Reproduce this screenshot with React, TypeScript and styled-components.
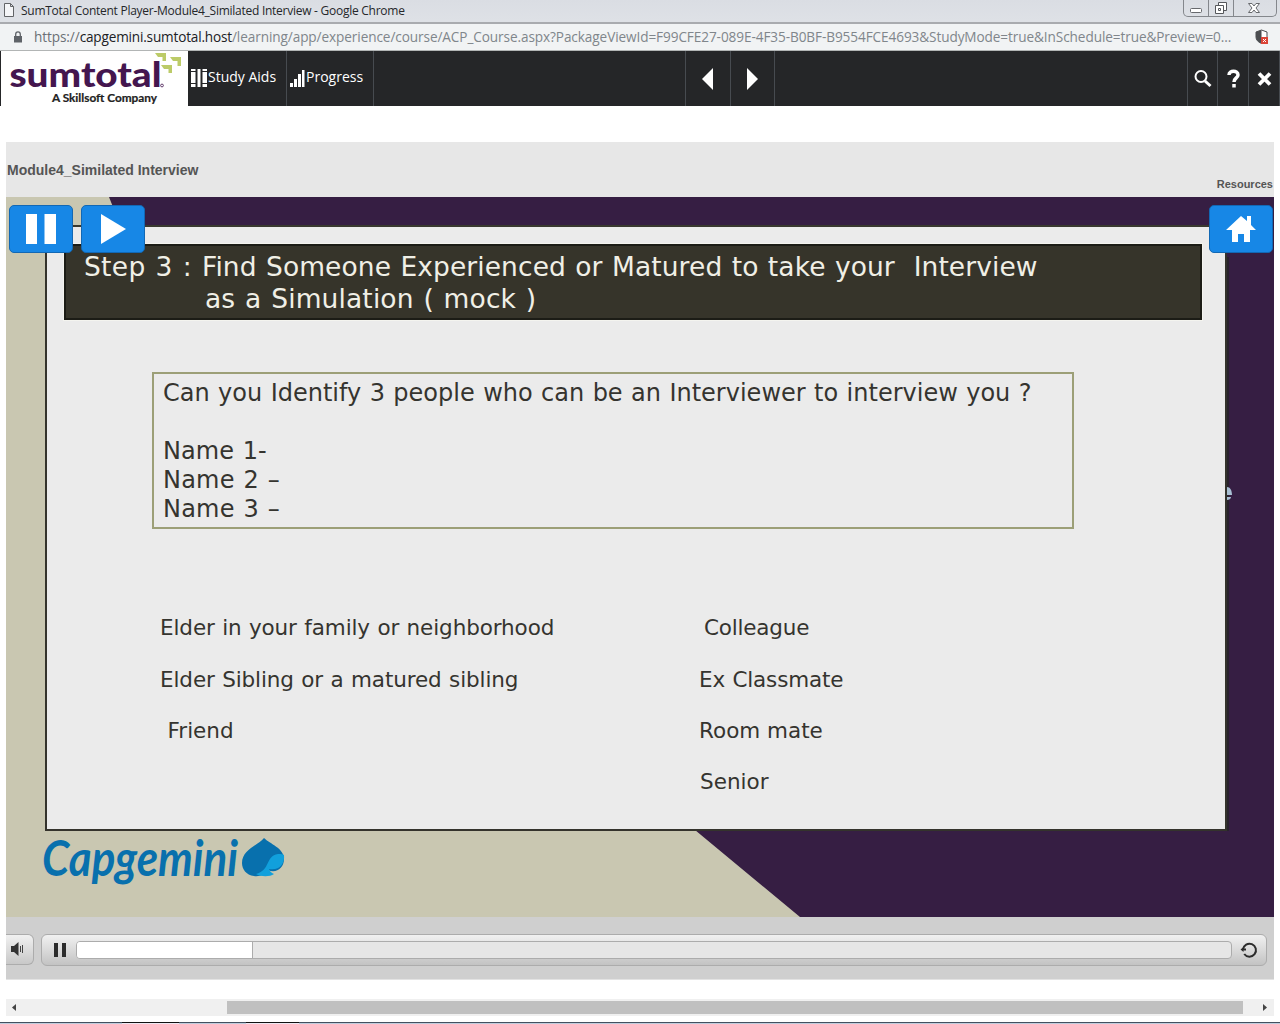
import React from "react";
import styled, { createGlobalStyle } from "styled-components";

const GlobalStyle = createGlobalStyle`
  * { box-sizing: border-box; }
  body { margin: 0; background: #fff; overflow: hidden; }
`;

const ui = `"Open Sans", "Noto Sans", sans-serif`;
const arial = `"Liberation Sans", Arial, sans-serif`;
const verdana = `"DejaVu Sans", Verdana, sans-serif`;

const Window = styled.div`
  width: 1280px;
  height: 1024px;
  display: flex;
  flex-direction: column;
  overflow: hidden;
  background: #fff;
  font-family: ${ui};
`;

const TitleBar = styled.header`
  height: 24px;
  flex: none;
  display: flex;
  align-items: flex-start;
  padding: 0 3px 0 4px;
  background: linear-gradient(#dadde3, #dee1e6 20px);
  border-bottom: 2px solid #a9abaf;
  color: #25272a;
`;

const Text = styled.span<{ $size: number; $spacing?: number; $word?: number; $line?: number }>`
  font-size: ${(p) => p.$size}px;
  letter-spacing: ${(p) => p.$spacing ?? 0}px;
  word-spacing: ${(p) => p.$word ?? 0}px;
  line-height: ${(p) => p.$line ?? 22}px;
  white-space: pre;
`;

const PageIcon = styled.svg`
  flex: none;
  margin: 3px 7px 0 0;
`;

const WindowControls = styled.div`
  display: flex;
  margin-left: auto;
  height: 17px;
  border: 1px solid #84878c;
  border-top: 0;
  border-radius: 0 0 5px 5px;
`;

const WindowControl = styled.div<{ $width: number }>`
  width: ${(p) => p.$width}px;
  display: flex;
  justify-content: center;
  & + & { border-left: 1px solid #84878c; }
`;

const AddressBar = styled.div`
  height: 27px;
  flex: none;
  display: flex;
  align-items: center;
  padding: 0 11px 0 13px;
  background: #f1f3f4;
  border-bottom: 1px solid #b2b5b5;
  color: #80868b;
`;

const Lock = styled.svg`
  flex: none;
  margin: 0 11px 0 0;
`;

const Host = styled.span`
  color: #202124;
  letter-spacing: -0.18px;
`;

const Scheme = styled.span`
  color: #6b7075;
`;

const Shield = styled.svg`
  flex: none;
  margin-left: auto;
`;

const Toolbar = styled.nav`
  height: 55px;
  flex: none;
  display: flex;
  background: #252628;
  color: #fff;
`;

const Brand = styled.div`
  width: 187px;
  margin-left: 1px;
  background: #fff;
`;

const Tool = styled.div<{ $width: number; $center?: boolean }>`
  width: ${(p) => p.$width}px;
  display: flex;
  align-items: center;
  justify-content: ${(p) => (p.$center ? "center" : "flex-start")};
  padding-left: ${(p) => (p.$center ? 0 : 3)}px;
  padding-bottom: ${(p) => (p.$center ? 0 : 2)}px;
  border-right: 1px solid #474b50;
`;

const ToolLabel = styled(Text)`
  margin-top: -2px;
`;

const Gap = styled.div<{ $width: number }>`
  width: ${(p) => p.$width}px;
  border-right: 1px solid #474b50;
`;

const Player = styled.main`
  width: 1268px;
  margin: 36px 0 0 6px;
  flex: none;
`;

const PlayerHeader = styled.div`
  height: 55px;
  display: flex;
  justify-content: space-between;
  padding: 0 1px;
  background: #e7e7e7;
  color: #555;
  font-family: ${arial};
  font-weight: bold;
`;

const ModuleName = styled(Text)`
  padding-top: 17px;
`;

const Resources = styled(Text)`
  padding-top: 31px;
`;

const Slide = styled.section`
  position: relative;
  height: 720px;
  padding: 28px 46px 0 39px;
  overflow: hidden;
  background: #c9c7b1;
  font-family: ${verdana};
`;

const Backdrop = styled.svg`
  position: absolute;
  inset: 0;
`;

const Sheet = styled.div`
  position: relative;
  width: 1182px;
  height: 606px;
  padding: 17px 17px 0 17px;
  background: #ebebeb;
  border: 2px solid #34332c;
  border-top-color: #39382f;
`;

const Heading = styled.div`
  width: 1138px;
  height: 76px;
  padding: 5px 0 0 18px;
  background: #36342a;
  border: 2px solid #1c1c16;
  box-shadow: 0 0 0 1px #f4f4ef;
  color: #f0efe6;
  display: flex;
  flex-direction: column;
`;

const HeadingSecond = styled(Text)`
  padding-left: 121px;
`;

const Question = styled.div`
  width: 922px;
  height: 157px;
  margin: 52px 0 0 88px;
  padding: 5px 0 0 9px;
  border: 2px solid #9c9f77;
  color: #35342f;
  display: flex;
  flex-direction: column;
`;

const Choices = styled.div`
  display: grid;
  grid-template-columns: 539px 1fr;
  grid-auto-rows: 51.4px;
  padding: 85px 0 0 96px;
  color: #35342f;
`;

const Choice = styled(Text)<{ $indent?: number }>`
  padding-left: ${(p) => p.$indent ?? 0}px;
`;

const Logo = styled.div`
  position: relative;
  display: flex;
  align-items: flex-start;
  margin: -16px 0 0 -9px;
`;

const SlideButton = styled.button<{ $left: number }>`
  position: absolute;
  top: 8px;
  left: ${(p) => p.$left}px;
  width: 64px;
  height: 48px;
  padding: 0;
  display: flex;
  align-items: center;
  justify-content: center;
  background: #1787e6;
  border: 1px solid #1268b4;
  border-radius: 5px;
`;

const Controls = styled.div`
  height: 63px;
  display: flex;
  align-items: flex-start;
  gap: 7px;
  padding: 17px 7px 0 0;
  background: #cfcfcf;
  border-bottom: 1px solid #e3e3e3;
`;

const Volume = styled.div`
  width: 28px;
  height: 31px;
  padding: 7px 0 0 4px;
  display: flex;
  align-items: flex-start;
  border: 1px solid #acacac;
  border-left: 0;
  border-radius: 0 6px 6px 0;
  background: linear-gradient(#f1f1f1, #c8c8c8);
`;

const SeekBar = styled.div`
  flex: 1;
  height: 32px;
  display: flex;
  align-items: center;
  padding: 0 8px 0 12px;
  border: 1px solid #acacac;
  border-radius: 6px;
  background: linear-gradient(#f1f1f1, #c3c3c3);
`;

const Track = styled.div`
  flex: 1;
  height: 18px;
  margin: 0 8px 0 9px;
  border: 1px solid #acacac;
  border-radius: 4px;
  background: #e6e6e6;
  overflow: hidden;
`;

const Played = styled.div`
  width: 176px;
  height: 16px;
  background: #fff;
  border-right: 1px solid #acacac;
`;

const ScrollBar = styled.div`
  width: 1268px;
  height: 17px;
  flex: none;
  margin: 19px 0 0 6px;
  padding: 0 6px;
  display: flex;
  align-items: center;
  background: #f0f0f0;
`;

const Thumb = styled.div`
  width: 1016px;
  height: 13px;
  margin: 0 auto 0 210px;
  background: #c0c0c0;
`;

const Taskbar = styled.footer`
  display: flex;
  height: 2px;
  margin-top: auto;
  background: linear-gradient(#43505f 50%, #c0cddd 50%);
`;

const TaskItem = styled.div<{ $width: number; $offset: number }>`
  width: ${(p) => p.$width}px;
  margin-left: ${(p) => p.$offset}px;
  background: linear-gradient(#111 50%, #eee8f2 50%);
`;

function BrandLogo() {
  return (
    <svg width="187" height="55" viewBox="1 51 187 55">
      <text x="9.500" y="87" fontFamily="Lato, sans-serif" fontWeight="900" fontSize="34" fill="#44164f" textLength="152" lengthAdjust="spacingAndGlyphs">sumtotal</text>
      <circle cx="162" cy="85.500" r="1.400" fill="none" stroke="#44164f" strokeWidth=".8" />
      <text x="52" y="102" fontFamily="Lato, sans-serif" fontWeight="700" fontSize="10.5" fill="#222" stroke="#222" strokeWidth=".2" textLength="105" lengthAdjust="spacingAndGlyphs">A Skillsoft Company</text>
      <g fill="#bccb68">
        <path d="M155 53h11v8h-3.500v-4H158z" />
        <path d="M170 57h11v9h-3.500v-5H173z" />
        <path d="M161 65h11v8h-3.500v-4H164z" />
      </g>
    </svg>
  );
}

function SpadeLogo() {
  return (
    <Logo>
      <svg width="256" height="88" viewBox="36 815 256 88">
        <text x="42" y="876" fontFamily="Lato, sans-serif" fontStyle="italic" fontWeight="700" fontSize="49" fill="#0870ad" textLength="196" lengthAdjust="spacingAndGlyphs">Capgemini</text>
        <path fill="#0870ad" d="M264 838c6 6 20 10 20 21 0 9-8 15-16 11-3 4-8 7-14 6-8-1-12-7-12-13 0-13 15-17 22-25z" />
        <path fill="#11a0dc" d="M284 855c1 9-5 16-15 14 1 3 3 4 5 5-4 3-13 3-18 0 15-4 9-18 22-20 3 0 5 0 6 1z" />
      </svg>
    </Logo>
  );
}

export default function App() {
  return (
    <Window>
      <GlobalStyle />
      <TitleBar>
        <PageIcon width="10" height="14" viewBox="0 0 10 14" fill="#f4f5f7" stroke="#626467">
          <path d="M.5.5h6l3 3v10h-9zM6.5.5v3h3" />
        </PageIcon>
        <Text $size={12} $spacing={-0.26}>SumTotal Content Player-Module4_Similated Interview - Google Chrome</Text>
        <WindowControls>
          <WindowControl $width={24}>
            <svg width="14" height="16"><rect x="1.5" y="8.5" width="11" height="4" rx="1" fill="#fff" stroke="#67696d" /></svg>
          </WindowControl>
          <WindowControl $width={25}>
            <svg width="14" height="16" fill="#fff" stroke="#55575b"><path d="M4.5 2.500h8v8h-8z" /><path d="M1.500 5.500h8v8h-8z" /><path d="M4.500 8.500h2v2h-2z" /></svg>
          </WindowControl>
          <WindowControl $width={43}>
            <svg width="18" height="16" viewBox="3 0 18 16" fill="#fff" stroke="#67696d"><path d="M5.500 3.500h3.500l2 2.500 2-2.500h3.500l-3.500 4.500 3.500 4.500H13L11 10l-2 2.500H5.500L9 8z" /></svg>
          </WindowControl>
        </WindowControls>
      </TitleBar>
      <AddressBar>
        <Lock width="10" height="12" viewBox="0 0 10 12"><path fill="#5f6368" d="M1 5h8v6.500H1z" /><path d="M2.700 5V3.200a2.300 2.300 0 0 1 4.600 0V5" fill="none" stroke="#5f6368" strokeWidth="1.300" /></Lock>
        <Text $size={13.6} $spacing={-0.09}>
          <Scheme>https://</Scheme><Host>capgemini.sumtotal.host</Host>/learning/app/experience/course/ACP_Course.aspx?PackageViewId=F99CFE27-089E-4F35-B0BF-B9554FCE4693&amp;StudyMode=true&amp;InSchedule=true&amp;Preview=0...
        </Text>
        <Shield width="14" height="16" viewBox="0 0 14 16">
          <path d="M6.500 1 12 3v5c0 3-2 5-5.500 6.500C3 13 1 11 1 8V3z" fill="#fff" stroke="#4b4d50" />
          <path d="M6.500 1v13.500C3 13 1 11 1 8V3z" fill="#4b4d50" />
          <path d="M6 8h7v7H6z" fill="#db4437" /><path d="m8 10 3 3m0-3-3 3" stroke="#fff" />
        </Shield>
      </AddressBar>
      <Toolbar>
        <Brand><BrandLogo /></Brand>
        <Tool $width={99}>
          <svg width="17" height="18" fill="#fff"><path d="M0 0h4.500v18H0zM6.500 0H9.500v18h-3zM11.500 0h4.500v18h-4.500z" /><path d="M0 2.500h5M0 14.500h5M11 2.500h5M11 14.500h5" stroke="#252628" /></svg>
          <ToolLabel $size={14}>Study Aids</ToolLabel>
        </Tool>
        <Tool $width={87}>
          <svg width="16" height="18" fill="#fff"><path d="M0 14h3v4H0zM4 10h3v8H4zM8 5h3v13H8zM12 1h2.500v17H12z" /></svg>
          <ToolLabel $size={14}>Progress</ToolLabel>
        </Tool>
        <Gap $width={312} />
        <Tool $width={45} $center><svg width="14" height="22"><path d="M12 0v22L1 11z" fill="#fff" /></svg></Tool>
        <Tool $width={44} $center><svg width="14" height="22"><path d="M1 0v22l11-11z" fill="#fff" /></svg></Tool>
        <Gap $width={413} />
        <Tool $width={30} $center>
          <svg width="20" height="20" fill="none" stroke="#fff"><circle cx="8" cy="7.500" r="5.500" strokeWidth="2" /><path d="m12 12 5.500 5" strokeWidth="3" /></svg>
        </Tool>
        <Tool $width={31} $center>
          <svg width="16" height="20" fill="none" stroke="#fff" strokeWidth="3.500"><path d="M4 6c0-5 9-5 9 0 0 3-4 3-4 7" /><path d="M9 15v3.500" /></svg>
        </Tool>
        <Tool $width={31} $center>
          <svg width="16" height="16"><path d="m3 2.500 11 11M14 2.500 3 13.500" stroke="#fff" strokeWidth="3.800" /></svg>
        </Tool>
      </Toolbar>
      <Player>
        <PlayerHeader>
          <ModuleName $size={14}>Module4_Similated Interview</ModuleName>
          <Resources $size={11}>Resources</Resources>
        </PlayerHeader>
        <Slide>
          <Backdrop width="1268" height="720">
            <path d="M103 0H1268V720H794L689 633V300L115 30Z" fill="#361e43" />
            <path d="M1221 60h2v574H695v-2h526z" fill="#29232d" />
            <path d="M1221 290c3 0 5 3 5 8h-5zM1221 300h4c0 2-2 3-4 3z" fill="#a9c0d4" />
          </Backdrop>
          <Sheet>
            <Heading>
              <Text $size={26.5} $spacing={0.12} $line={32}><Text $size={26.5} $spacing={0.3} $word={1.3} $line={32}>Step 3 : </Text><Text $size={26.5} $spacing={0.08} $word={0.9} $line={32}>Find Someone Experienced or Matured to take your  Interview</Text></Text>
              <HeadingSecond $size={26.5} $spacing={0.13} $word={1.2} $line={32}>as a Simulation ( mock )</HeadingSecond>
            </Heading>
            <Question>
              <Text $size={24} $word={0.8} $line={29}>Can you Identify 3 people who can be an Interviewer to interview you ?</Text>
              <Text $size={24} $line={29}> </Text>
              <Text $size={24} $spacing={0.1} $word={0.8} $line={29}>Name 1-</Text>
              <Text $size={24} $spacing={0.2} $word={1} $line={29}>Name 2 –</Text>
              <Text $size={24} $spacing={0.2} $word={1} $line={29}>Name 3 –</Text>
            </Question>
            <Choices>
              <Choice $size={21.5} $spacing={-0.11} $word={0.7} $line={28}>Elder in your family or neighborhood</Choice>
              <Choice $size={21.5} $spacing={-0.2} $line={28} $indent={5}>Colleague</Choice>
              <Choice $size={21.5} $spacing={-0.11} $word={0.7} $line={29}>Elder Sibling or a matured sibling</Choice>
              <Choice $size={21.5} $spacing={-0.15} $word={0.7} $line={29}>Ex Classmate</Choice>
              <Choice $size={21.5} $line={27} $indent={7.5}>Friend</Choice>
              <Choice $size={21.5} $line={27}>Room mate</Choice>
              <span />
              <Choice $size={21.5} $line={28} $indent={1}>Senior</Choice>
            </Choices>
          </Sheet>
          <SpadeLogo />
          <SlideButton $left={3} aria-label="Pause"><svg width="30" height="30" fill="#fff"><path d="M0 0h11v30H0zM18.500 0H30v30H18.500z" /></svg></SlideButton>
          <SlideButton $left={75} aria-label="Play"><svg width="26" height="30" fill="#fff"><path d="M1 0v30l25-15z" /></svg></SlideButton>
          <SlideButton $left={1203} aria-label="Home"><svg width="30" height="28" fill="#fff"><path d="M15 1 0 15h6v12h6v-8h6v8h6V15h6l-5-5V1h-4v5z" /></svg></SlideButton>
        </Slide>
        <Controls>
          <Volume>
            <svg width="18" height="15"><path d="M1 4h3l4.500-4v14L4 10H1z" fill="#333" /><path d="M10.500 4v6M12.500 3v8" stroke="#444" /></svg>
          </Volume>
          <SeekBar>
            <svg width="13" height="15" fill="#2c2c2c"><path d="M0 0h4v14H0zM8 0h4v14H8z" /></svg>
            <Track><Played /></Track>
            <svg width="18" height="18" fill="none" stroke="#2c2c2c"><path d="M3 8.500a6.500 6.500 0 1 1 1.200 4.500" strokeWidth="2" /><path d="M.5 8.500 3.500 6v1.500H6v2H3.500V11z" fill="#2c2c2c" stroke="none" /></svg>
          </SeekBar>
        </Controls>
      </Player>
      <ScrollBar>
        <svg width="5" height="8" fill="#444"><path d="M4 0v7L0 3.500z" /></svg>
        <Thumb />
        <svg width="5" height="8" fill="#444"><path d="M0 0v7l4-3.500z" /></svg>
      </ScrollBar>
      <Taskbar>
        <TaskItem $width={57} $offset={122} />
        <TaskItem $width={53} $offset={67} />
      </Taskbar>
    </Window>
  );
}
